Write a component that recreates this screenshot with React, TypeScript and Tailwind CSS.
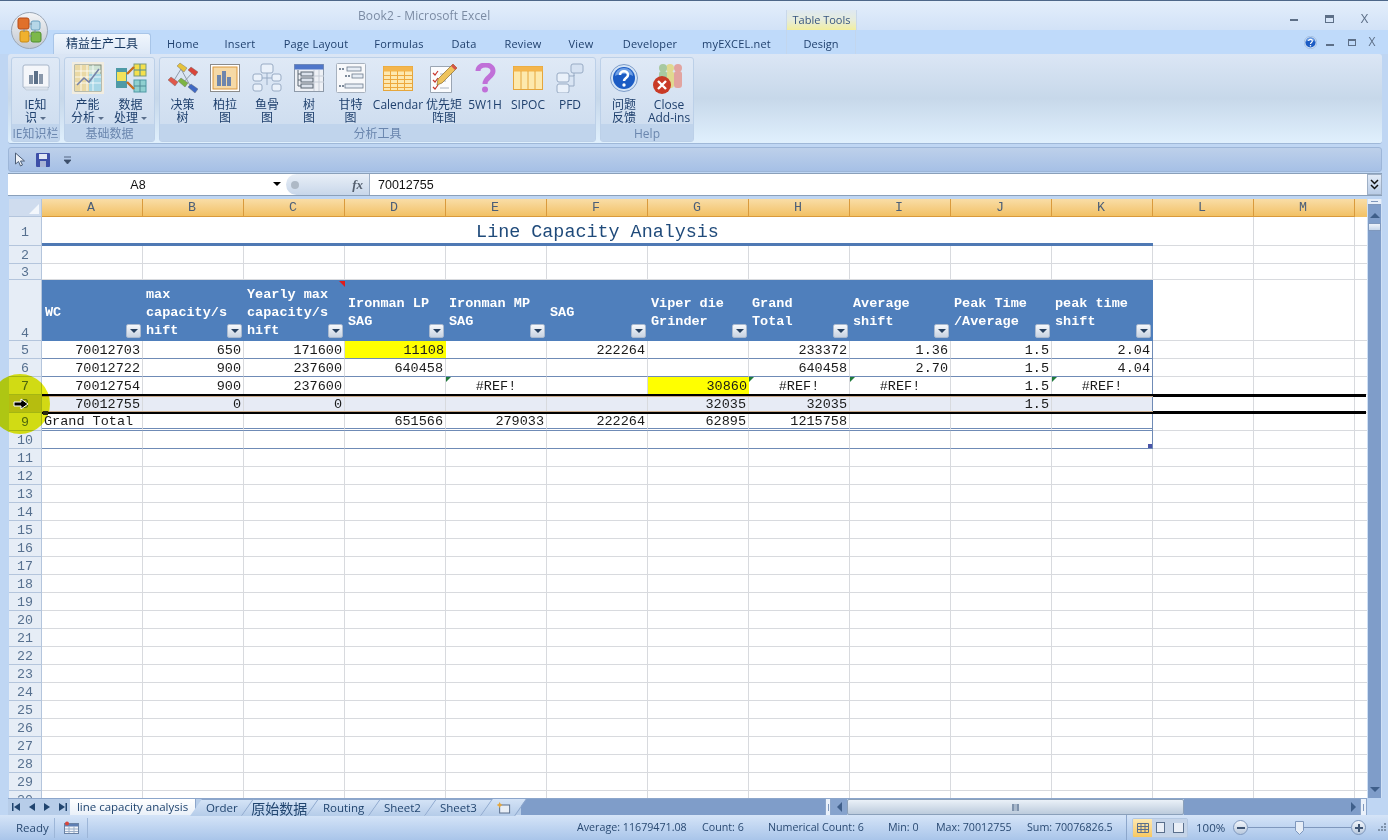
import type { ReactNode } from 'react';

const MONO = 'font-["Liberation_Mono","Noto_Sans_CJK_SC",monospace]';
const COL_LETTERS = ['A', 'B', 'C', 'D', 'E', 'F', 'G', 'H', 'I', 'J', 'K', 'L', 'M'];

type Cell = { t: string; left?: boolean; center?: boolean; yellow?: boolean; green?: boolean };
const n = (t: string): Cell => ({ t });
const ref: Cell = { t: '#REF!', center: true, green: true };

const HEADERS = [
  'WC',
  'max\ncapacity/s\nhift',
  'Yearly max\ncapacity/s\nhift',
  'Ironman LP\nSAG',
  'Ironman MP\nSAG',
  'SAG',
  'Viper die\nGrinder',
  'Grand\nTotal',
  'Average\nshift',
  'Peak Time\n/Average',
  'peak time\nshift',
];

const DATA: Record<number, Cell[]> = {
  5: [n('70012703'), n('650'), n('171600'), { t: '11108', yellow: true }, n(''), n('222264'), n(''), n('233372'), n('1.36'), n('1.5'), n('2.04')],
  6: [n('70012722'), n('900'), n('237600'), n('640458'), n(''), n(''), n(''), n('640458'), n('2.70'), n('1.5'), n('4.04')],
  7: [n('70012754'), n('900'), n('237600'), n(''), ref, n(''), { t: '30860', yellow: true }, ref, ref, n('1.5'), ref],
  8: [n('70012755'), n('0'), n('0'), n(''), n(''), n(''), n('32035'), n('32035'), n(''), n('1.5'), n('')],
  9: [{ t: 'Grand Total', left: true }, n(''), n(''), n('651566'), n('279033'), n('222264'), n('62895'), n('1215758'), n(''), n(''), n('')],
  10: Array.from({ length: 11 }, () => n('')),
};

const ROW_NUMS = Array.from({ length: 20 }, (_, i) => i + 11);

function RowHead({ num, h, bottom }: { num: number; h: string; bottom?: boolean }) {
  return (
    <div className={`${h} w-[33px] shrink-0 flex justify-center ${bottom ? 'items-end' : 'items-center pt-[3px]'} ${num === 8 ? 'bg-[#c8cdb8]' : 'bg-[#e6edf6]'} border-b border-r border-[#b4c5dc] text-[13.3px] leading-none text-[#56708f] ${MONO}`}>
      {num}
    </div>
  );
}

function BlankCols({ count, h }: { count: number; h: string }) {
  return (
    <>
      {Array.from({ length: count }, (_, i) => (
        <div key={i} className={`${h} w-[101px] shrink-0 border-r border-b border-[#d8dade]`} />
      ))}
    </>
  );
}

function FilterBtn() {
  return (
    <div className="absolute right-[2px] bottom-[3px] w-[15px] h-[14px] rounded-[2px] border border-[#a9b9cf] bg-gradient-to-b from-[#f6f8fb] to-[#c8d3e2] flex items-center justify-center">
      <div className="w-0 h-0 border-l-[4px] border-r-[4px] border-t-[4px] border-l-transparent border-r-transparent border-t-[#27405f]" />
    </div>
  );
}

function DataRow({ num }: { num: number }) {
  const cells = DATA[num];
  return (
    <div className="flex">
      <RowHead num={num} h="h-[18px]" />
      {cells.map((c, i) => (
        <div
          key={i}
          className={`relative h-[18px] w-[101px] shrink-0 flex items-center px-[2px] pt-[3px] text-[13.5px] leading-none text-[#1a1a1a] ${num === 9 ? 'border-b-[3px] border-double' : 'border-b'} border-[#6f8bb6] ${MONO}
            ${c.left ? 'justify-start' : c.center ? 'justify-center' : 'justify-end'}
            ${c.yellow ? 'bg-[#ffff00]' : num === 8 ? 'bg-[#e7ebf5]' : 'bg-white'}
            ${i === 10 ? 'border-r border-r-[#6f8bb6]' : c.yellow ? '' : 'border-r border-r-[#d8dade]'}`}
        >
          {c.green && <div className="absolute left-0 top-0 w-0 h-0 border-t-[5px] border-r-[5px] border-t-[#1f7a3a] border-r-transparent" />}
          {c.t}
          {num === 10 && i === 10 && <div className="absolute right-0 bottom-0 w-[4px] h-[4px] bg-[#4a55a8]" />}
        </div>
      ))}
      <BlankCols count={3} h="h-[18px]" />
    </div>
  );
}

function RibbonGroup({ w, label, children }: { w: string; label: string; children: ReactNode }) {
  return (
    <div className={`${w} h-[85px] shrink-0 flex flex-col rounded-[3px] border border-[#bcd0e8] bg-gradient-to-b from-[#dfe9f6] to-[#cbdbee] overflow-hidden`}>
      <div className="h-[68px] flex">{children}</div>
      <div className="flex-1 bg-[#c0d4ec] text-center text-[12px] leading-[19px] text-[#6a86ae]">{label}</div>
    </div>
  );
}

function RibbonItem({ w, lines, icon, caret }: { w: string; lines: string[]; icon: ReactNode; caret?: boolean }) {
  return (
    <div className={`${w} shrink-0 flex flex-col items-center`}>
      <div className="h-[40px] flex items-center justify-center">{icon}</div>
      <div className="text-center text-[12px] leading-[13px] text-[#20416e] whitespace-nowrap">
        {lines.map((l, i) => (
          <div key={i}>
            {l}
            {caret && i === lines.length - 1 && <span className="inline-block ml-[3px] mb-[2px] w-0 h-0 border-l-[3px] border-r-[3px] border-t-[3px] border-l-transparent border-r-transparent border-t-[#5a6f8c]" />}
          </div>
        ))}
      </div>
    </div>
  );
}

function IconIE() {
  return (
    <svg width="30" height="28" viewBox="0 0 30 28">
      <path d="M2 3a2 2 0 0 1 2-2h22a2 2 0 0 1 2 2v20l-2 2H5l-3-2z" fill="#f4f6fa" stroke="#a8b6c9" />
      <path d="M3 23h24v3H5z" fill="#dbe2ec" stroke="#b7c2d1" strokeWidth=".6" />
      <rect x="8" y="11" width="4" height="9" fill="#7f8fa3" />
      <rect x="13" y="7" width="4" height="13" fill="#5b6f87" />
      <rect x="18" y="10" width="4" height="10" fill="#8a98ab" />
    </svg>
  );
}

function IconCapacity() {
  return (
    <svg width="32" height="32" viewBox="0 0 32 32">
      <rect x="0" y="0" width="32" height="32" fill="#f2ede0" />
      <rect x="3" y="3" width="26" height="26" fill="#cfe3d4" stroke="#7d8a7a" />
      <rect x="3" y="3" width="14" height="26" fill="#ead9a5" />
      <rect x="17" y="12" width="12" height="17" fill="#a6d6e6" />
      <path d="M3 9h26M3 15h26M3 21h26M9 3v26M15 3v26M21 3v26" stroke="#fff" strokeWidth=".8" />
      <path d="M5 23l7-7 5 4 10-13" fill="none" stroke="#7783a8" strokeWidth="1.6" />
    </svg>
  );
}

function IconBlocks() {
  return (
    <svg width="32" height="32" viewBox="0 0 32 32">
      <rect x="1" y="6" width="11" height="20" fill="#4e9aa6" />
      <rect x="2" y="10" width="9" height="9" fill="#f2e25a" />
      <rect x="19" y="2" width="12" height="12" fill="#f4e04c" stroke="#7f9b7a" />
      <rect x="19" y="18" width="12" height="12" fill="#8fd0d0" stroke="#4e9aa6" />
      <path d="M25 18v12M19 24h12M25 2v12M19 8h12" stroke="#4e8a96" />
      <path d="M12 12l7-7M12 20l7 7" stroke="#c86d1c" strokeWidth="2.4" />
    </svg>
  );
}

function IconDecision() {
  const d = (x: number, y: number, c: string) => <path d={`M${x - 5} ${y - 2}l3-3 7 5-3 4z`} fill={c} stroke="#666" strokeWidth=".4" />;
  return (
    <svg width="30" height="32" viewBox="0 0 30 32">
      <path d="M13 7l11 20M13 7L5 20M25 10L14 22" stroke="#8f9aa8" strokeWidth="1" />
      {d(14, 6, '#e5c23c')}
      {d(25, 10, '#d9453a')}
      {d(5, 20, '#e0584a')}
      {d(15, 21, '#7cb544')}
      {d(25, 27, '#3f69c4')}
    </svg>
  );
}

function IconPareto() {
  return (
    <svg width="30" height="28" viewBox="0 0 30 28">
      <rect x=".5" y=".5" width="29" height="27" fill="#fff" stroke="#8b8b8b" />
      <rect x="3" y="3" width="24" height="22" fill="#f5d9a6" stroke="#d9973f" />
      <rect x="7" y="11" width="4" height="11" fill="#6d86ad" />
      <rect x="12" y="7" width="4" height="15" fill="#6d86ad" />
      <rect x="17" y="13" width="4" height="9" fill="#6d86ad" />
    </svg>
  );
}

function IconFish() {
  return (
    <svg width="30" height="30" viewBox="0 0 30 30" fill="#eaf1fa" stroke="#98abc4">
      <path d="M4 15h22M15 8v14" />
      <rect x="9" y="1" width="12" height="9" rx="2" />
      <rect x="1" y="11" width="9" height="7" rx="2" />
      <rect x="20" y="11" width="9" height="7" rx="2" />
      <rect x="1" y="21" width="9" height="7" rx="2" />
      <rect x="20" y="21" width="9" height="7" rx="2" />
    </svg>
  );
}

function IconTree() {
  return (
    <svg width="30" height="28" viewBox="0 0 30 28">
      <rect x=".5" y=".5" width="29" height="27" fill="#eef1f6" stroke="#8e9aa9" />
      <rect x=".5" y=".5" width="29" height="5" fill="#4f76c9" />
      <path d="M20 6v21M25 6v21M20 12h10M20 18h10" stroke="#c7ced8" />
      <rect x="7" y="8" width="12" height="4" fill="#dbe2ec" stroke="#5b6673" />
      <rect x="7" y="14" width="12" height="4" fill="#dbe2ec" stroke="#5b6673" />
      <rect x="7" y="20" width="12" height="4" fill="#dbe2ec" stroke="#5b6673" />
      <path d="M4 6v16h3M4 10h3M4 16h3" fill="none" stroke="#5b6673" />
    </svg>
  );
}

function IconGantt() {
  return (
    <svg width="30" height="30" viewBox="0 0 30 30">
      <rect x=".5" y=".5" width="29" height="29" rx="1" fill="#f8f9fb" stroke="#a8b2bf" />
      <g fill="#e7edf5" stroke="#6c7a8c" strokeWidth=".8">
        <rect x="11" y="4" width="14" height="4" />
        <rect x="16" y="11" width="11" height="4" />
        <rect x="9" y="21" width="18" height="4" />
      </g>
      <path d="M3 6h6M9 13h6M3 23h5" stroke="#56677c" strokeWidth="1.6" strokeDasharray="2 1" />
    </svg>
  );
}

function IconCalendar() {
  return (
    <svg width="30" height="25" viewBox="0 0 30 25">
      <rect x=".5" y=".5" width="29" height="24" fill="#fde8b0" stroke="#e5a63c" />
      <rect x=".5" y=".5" width="29" height="5" fill="#f4b54c" />
      <path d="M1 9.500h28M1 13.500h28M1 17.500h28M1 21.500h28M7.500 5v19M14.500 5v19M21.500 5v19" stroke="#eda83d" />
    </svg>
  );
}

function IconPriority() {
  return (
    <svg width="28" height="30" viewBox="0 0 28 30">
      <path d="M.5 3.500h21v26H.5z" fill="#fbfcfe" stroke="#9aa5b3" />
      <path d="M3 10l2 2 3-4M3 17l2 2 3-4M3 24l2 2 3-4" fill="none" stroke="#c8392e" strokeWidth="1.2" />
      <path d="M10 11h9M10 18h6M10 25h9" stroke="#aab4c0" />
      <path d="M23 1l4 4-15 15-5 2 1-6z" fill="#eec35c" stroke="#8a6a2c" strokeWidth=".7" />
      <path d="M23 1l4 4-2 2-4-4z" fill="#d4544a" />
    </svg>
  );
}

function IconQuestion() {
  return (
    <svg width="22" height="30" viewBox="0 0 22 30" fill="none">
      <path d="M4 8c0-8 15-8 15 0 0 6-8 6-8 13" stroke="#c070d8" strokeWidth="5" />
      <circle cx="11" cy="26.500" r="3" fill="#c070d8" />
    </svg>
  );
}

function IconSipoc() {
  return (
    <svg width="30" height="24" viewBox="0 0 30 24">
      <rect x=".5" y=".5" width="29" height="23" fill="#fde9ad" stroke="#e5a63c" />
      <rect x=".5" y=".5" width="29" height="5" fill="#f4b54c" />
      <path d="M8 5v18M15 5v18M22 5v18" stroke="#e5a63c" />
    </svg>
  );
}

function IconPfd() {
  return (
    <svg width="28" height="30" viewBox="0 0 28 30" fill="#eaf1fa" stroke="#98abc4">
      <path d="M13 13h5V8M13 23h5V12" fill="none" />
      <rect x="15" y="1" width="12" height="9" rx="2" fill="#d6e2f2" />
      <rect x="1" y="10" width="12" height="9" rx="2" />
      <rect x="1" y="21" width="12" height="9" rx="2" />
    </svg>
  );
}

function IconHelp({ size = 28 }: { size?: number }) {
  return (
    <svg width={size} height={size} viewBox="0 0 28 28">
      <circle cx="14" cy="14" r="13.500" fill="#d4e4f6" stroke="#7d9cc8" />
      <circle cx="14" cy="14" r="11" fill="#1c5cc4" />
      <path d="M5 12a9 8 0 0 1 18 0c-5-3-13-3-18 0z" fill="#6f9fe4" />
      <path d="M10 11c0-5 8-5 8 0 0 3-4 3-4 6" fill="none" stroke="#fff" strokeWidth="2.600" />
      <circle cx="14" cy="21" r="1.700" fill="#fff" />
    </svg>
  );
}

function IconAddins() {
  const p = (x: number, c: string) => (
    <g fill={c}>
      <circle cx={x} cy="6" r="4" />
      <rect x={x - 4} y="9" width="8" height="17" rx="3" />
    </g>
  );
  return (
    <svg width="34" height="32" viewBox="0 0 34 32">
      {p(26, '#e2a4a0')}
      {p(18, '#e0d98f')}
      {p(11, '#a8c9a0')}
      <circle cx="10" cy="23" r="9" fill="#c93a26" />
      <path d="M6 19l8 8M14 19l-8 8" stroke="#fff" strokeWidth="2.400" />
    </svg>
  );
}

function IconSave() {
  return (
    <svg width="14" height="14" viewBox="0 0 14 14">
      <rect width="14" height="14" rx="1" fill="#3d4fa8" />
      <rect x="3" y="1" width="8" height="5" fill="#dfe6f5" />
      <rect x="4" y="8" width="6" height="6" fill="#a9b4d6" />
    </svg>
  );
}

function OfficeLogo() {
  return (
    <svg width="30" height="30" viewBox="0 0 30 30">
      <rect x="3" y="2" width="11" height="11" rx="2" fill="#e0702a" stroke="#b54a18" />
      <rect x="16" y="5" width="9" height="9" rx="2" fill="#b6d7e8" stroke="#6ba1c0" />
      <rect x="5" y="15" width="9" height="11" rx="2" fill="#f0b12e" stroke="#c98a14" />
      <rect x="16" y="16" width="10" height="10" rx="2" fill="#7db84a" stroke="#4f8f2c" />
      <path d="M14 8h3M14 20h3M9 13v3M20 14v3" stroke="#7f8b99" />
    </svg>
  );
}

function SheetTab({ label, w, cjk }: { label: string; w: string; cjk?: boolean }) {
  return (
    <div className={`${w} h-[17px] shrink-0 -skew-x-[35deg] border-r border-t border-[#8ca6cb] bg-gradient-to-b from-[#d4e3f6] to-[#b5cce9] flex items-center justify-center`}>
      <span className={`skew-x-[35deg] text-[#21456f] whitespace-nowrap ${cjk ? 'text-[14px]' : 'text-[11.5px]'}`}>{label}</span>
    </div>
  );
}

export default function App() {
  const tabs: [string, string][] = [
    ['Home', 'w-[64px]'],
    ['Insert', 'w-[50px]'],
    ['Page Layout', 'w-[102px]'],
    ['Formulas', 'w-[64px]'],
    ['Data', 'w-[66px]'],
    ['Review', 'w-[52px]'],
    ['View', 'w-[64px]'],
    ['Developer', 'w-[74px]'],
    ['myEXCEL.net', 'w-[99px]'],
  ];

  return (
    <div className='relative w-[1388px] h-[840px] overflow-hidden flex flex-col bg-[#bfd6f3] font-["Open_Sans","Noto_Sans_CJK_SC",sans-serif] text-[11px] text-[#20416e]'>
      {/* title bar */}
      <div className="h-[30px] shrink-0 flex items-start border-t border-[#4d6789] bg-gradient-to-b from-[#e3eefb] to-[#d2e2f7]">
        <div className="ml-[358px] mt-[7px] w-[428px] text-[12px] leading-[16px] text-[#7b8ba3] tracking-[0.1px]">Book2 - Microsoft Excel</div>
        <div className="mt-[9px] w-[71px] h-[20px] border-x border-[#c9d8ea] bg-gradient-to-b from-[#dfe9f2] via-[#e6ecdc] to-[#f2ee9c] text-center text-[11px] leading-[19px] text-[#37557f]">Table Tools</div>
        <div className="flex-1" />
        <div className="mt-[9px] w-[36px] flex justify-center"><div className="w-[8px] h-[2px] mt-[9px] bg-[#5d6f87]" /></div>
        <div className="mt-[14px] w-[35px] flex justify-center"><div className="w-[9px] h-[8px] border border-t-[3px] border-[#5d6f87]" /></div>
        <div className="mt-[9px] w-[35px] text-center text-[13px] leading-[16px] text-[#5d6f87] mr-[6px]">X</div>
      </div>

      {/* tabs */}
      <div className="h-[24px] shrink-0 flex items-end bg-[#bfdafa]">
        <div className="ml-[53px] w-[98px] h-[21px] rounded-t-[3px] border border-b-0 border-[#a8c5e8] bg-gradient-to-b from-[#f0f6fd] to-[#dde8f6] text-center text-[12px] leading-[20px] text-[#15365f]">精益生产工具</div>
        {tabs.map(([t, w]) => (
          <div key={t} className={`${w} h-[24px] shrink-0 text-center leading-[27px] tracking-[0.2px]`}>{t}</div>
        ))}
        <div className="w-[70px] h-[24px] shrink-0 border-x border-[#c2d6ee] text-center leading-[27px]">Design</div>
        <div className="flex-1" />
        <div className="h-[24px] flex items-center mr-[6px]">
          <IconHelp size={13} />
          <div className="w-[8px] h-[2px] ml-[9px] mt-[5px] bg-[#5d6f87]" />
          <div className="w-[8px] h-[7px] ml-[14px] border border-t-[2px] border-[#5d6f87]" />
          <div className="w-[20px] ml-[6px] text-center text-[12px] text-[#5d6f87]">X</div>
        </div>
      </div>

      {/* ribbon */}
      <div className="h-[90px] shrink-0 ml-[8px] mr-[6px] px-[3px] pt-[3px] flex gap-[4px] rounded-[3px] border-b border-[#9fb8d8] bg-gradient-to-b from-[#dbe6f5] via-[#c7d8ea] to-[#e0f0fd]">
        <RibbonGroup w="w-[49px]" label="IE知识栏">
          <RibbonItem w="w-[47px]" lines={['IE知', '识']} caret icon={<IconIE />} />
        </RibbonGroup>
        <RibbonGroup w="w-[91px]" label="基础数据">
          <RibbonItem w="w-[45px]" lines={['产能', '分析']} caret icon={<IconCapacity />} />
          <RibbonItem w="w-[41px]" lines={['数据', '处理']} caret icon={<IconBlocks />} />
        </RibbonGroup>
        <RibbonGroup w="w-[437px]" label="分析工具">
          <div className="w-[1px] shrink-0" />
          <RibbonItem w="w-[43px]" lines={['决策', '树']} icon={<IconDecision />} />
          <RibbonItem w="w-[42px]" lines={['柏拉', '图']} icon={<IconPareto />} />
          <RibbonItem w="w-[42px]" lines={['鱼骨', '图']} icon={<IconFish />} />
          <RibbonItem w="w-[42px]" lines={['树', '图']} icon={<IconTree />} />
          <RibbonItem w="w-[41px]" lines={['甘特', '图']} icon={<IconGantt />} />
          <RibbonItem w="w-[54px]" lines={['Calendar']} icon={<IconCalendar />} />
          <RibbonItem w="w-[38px]" lines={['优先矩', '阵图']} icon={<IconPriority />} />
          <RibbonItem w="w-[44px]" lines={['5W1H']} icon={<IconQuestion />} />
          <RibbonItem w="w-[42px]" lines={['SIPOC']} icon={<IconSipoc />} />
          <RibbonItem w="w-[42px]" lines={['PFD']} icon={<IconPfd />} />
        </RibbonGroup>
        <RibbonGroup w="w-[94px]" label="Help">
          <RibbonItem w="w-[46px]" lines={['问题', '反馈']} icon={<IconHelp />} />
          <RibbonItem w="w-[44px]" lines={['Close', 'Add-ins']} icon={<IconAddins />} />
        </RibbonGroup>
      </div>

      {/* quick access */}
      <div className="h-[25px] shrink-0 mt-[3px] ml-[8px] mr-[6px] flex items-center rounded-[3px] border border-[#9db6d8] bg-gradient-to-b from-[#bdd0ea] to-[#a6c0e6]">
        <svg className="ml-[5px]" width="12" height="15" viewBox="0 0 12 15">
          <path d="M1.500 1v11l3-2.500 2 4.500 2-1-2-4h4z" fill="#eef2f8" stroke="#4d5f78" />
        </svg>
        <div className="ml-[10px]"><IconSave /></div>
        <svg className="ml-[14px]" width="7" height="8" viewBox="0 0 7 8">
          <path d="M0 1h7M0 4h7l-3.500 4z" fill="#3c4f6b" stroke="#3c4f6b" strokeWidth=".8" />
        </svg>
      </div>

      {/* formula bar */}
      <div className="h-[23px] shrink-0 mt-[1px] ml-[8px] mr-[6px] flex border-y border-[#8aa0ba] bg-white text-[12.500px] text-[#111] font-['Liberation_Sans',sans-serif]">
        <div className="w-[278px] shrink-0 relative flex items-center justify-center pr-[18px] pt-[1px]">
          A8
          <div className="absolute right-[5px] top-[8px] w-0 h-0 border-l-[4px] border-r-[4px] border-t-[4px] border-l-transparent border-r-transparent border-t-black" />
        </div>
        <div className="w-[84px] shrink-0 flex items-center justify-between rounded-l-full border-r border-[#9fb0c6] bg-gradient-to-b from-[#e9eff7] to-[#c8d7ea]">
          <div className="w-[8px] h-[8px] ml-[5px] rounded-full bg-[#aeb9c6]" />
          <span className="mr-[6px] font-['Liberation_Serif',serif] italic font-bold text-[13px] text-[#55606f]">fx</span>
        </div>
        <div className="flex-1 pl-[8px] leading-[22px]">70012755</div>
        <div className="w-[15px] shrink-0 flex items-center justify-center border border-[#9fb0c6] bg-gradient-to-b from-[#e2ebf7] to-[#b9cce6]">
          <svg width="9" height="11" viewBox="0 0 9 11" fill="none" stroke="#111" strokeWidth="1.500">
            <path d="M1 1l3.500 3.500L8 1M1 6l3.500 3.500L8 6" />
          </svg>
        </div>
      </div>

      {/* sheet */}
      <div className="flex-1 min-h-0 flex pt-[3px] pl-[9px] pr-[6px]">
        <div className="w-[1358px] shrink-0 overflow-hidden bg-white">
          <div className="flex h-[18px]">
            <div className="w-[33px] shrink-0 bg-[#cfdcee] border-r border-b border-[#b4c5dc] flex items-end justify-end p-[2px]">
              <div className="w-0 h-0 border-b-[10px] border-l-[10px] border-b-[#f3f7fc] border-l-transparent" />
            </div>
            {COL_LETTERS.map(l => (
              <div key={l} className={`w-[101px] shrink-0 flex items-center justify-center pr-[2px] border-r border-b border-[#d99a3c] bg-gradient-to-b from-[#f9dda6] to-[#f2c164] text-[13.3px] text-[#4c5f78] ${MONO}`}>{l}</div>
            ))}
            <div className="flex-1 bg-gradient-to-b from-[#f9dda6] to-[#f2c164]" />
          </div>

          {/* row 1 title */}
          <div className="flex">
            <RowHead num={1} h="h-[29px]" />
            <div className={`h-[29px] w-[1111px] shrink-0 text-center text-[18.400px] leading-[32px] text-[#1f4a7a] border-b-[3px] border-[#4f79b4] ${MONO}`}>Line Capacity Analysis</div>
            <BlankCols count={3} h="h-[29px]" />
          </div>
          <div className="flex"><RowHead num={2} h="h-[18px]" /><BlankCols count={14} h="h-[18px]" /></div>
          <div className="flex"><RowHead num={3} h="h-[16px]" /><BlankCols count={14} h="h-[16px]" /></div>

          {/* row 4 table header */}
          <div className="flex">
            <RowHead num={4} h="h-[61px]" bottom />
            {HEADERS.map((text, i) => (
              <div key={i} className={`relative h-[61px] w-[101px] shrink-0 flex items-center px-[3px] pt-[4px] bg-[#4f7fbc] text-white font-bold text-[13.500px] leading-[18px] whitespace-pre-line ${MONO}`}>
                {i === 2 && <div className="absolute right-0 top-[1px] w-0 h-0 border-t-[6px] border-l-[6px] border-t-[#e01b1b] border-l-transparent" />}
                <div>{text}</div>
                <FilterBtn />
              </div>
            ))}
            <BlankCols count={3} h="h-[61px]" />
          </div>

          {[5, 6, 7, 8, 9, 10].map(r => <DataRow key={r} num={r} />)}

          {ROW_NUMS.map(r => (
            <div key={r} className="flex"><RowHead num={r} h="h-[18px]" /><BlankCols count={14} h="h-[18px]" /></div>
          ))}
        </div>

        {/* vertical scrollbar */}
        <div className="w-[15px] shrink-0 flex flex-col items-center bg-[#7f9dc9] border-x border-[#cfe0f5]">
          <div className="w-full h-[6px] bg-[#e8eff9] border-b border-[#7f98bd] flex items-center justify-center"><div className="w-[7px] h-[1px] bg-[#7f98bd]" /></div>
          <div className="mt-[8px] w-0 h-0 border-l-[5px] border-r-[5px] border-b-[5px] border-l-transparent border-r-transparent border-b-[#3f5f8a]" />
          <div className="mt-[5px] w-full h-[8px] border border-[#7f98bd] bg-gradient-to-b from-[#eef3fa] to-[#c6d6ea]" />
          <div className="flex-1" />
          <div className="mb-[6px] w-0 h-0 border-l-[5px] border-r-[5px] border-t-[5px] border-l-transparent border-r-transparent border-t-[#3f5f8a]" />
        </div>
      </div>

      {/* sheet tabs + horizontal scrollbar */}
      <div className="h-[17px] shrink-0 ml-[8px] mr-[21px] flex bg-[#b7cde9] border-t border-[#8ca6cb]">
        <div className="w-[62px] shrink-0 flex items-center justify-center gap-[9px] text-[#21456f]">
          <svg width="8" height="8" viewBox="0 0 8 8" fill="#21456f"><path d="M0 0h1.500v8H0zM8 0v8L2 4z" /></svg>
          <svg width="6" height="8" viewBox="0 0 6 8" fill="#21456f"><path d="M6 0v8L0 4z" /></svg>
          <svg width="6" height="8" viewBox="0 0 6 8" fill="#21456f"><path d="M0 0v8l6-4z" /></svg>
          <svg width="8" height="8" viewBox="0 0 8 8" fill="#21456f"><path d="M6.500 0H8v8H6.500zM0 0v8l6-4z" /></svg>
        </div>
        <div className="w-[126px] shrink-0 h-[17px] bg-gradient-to-b from-[#fff] to-[#e8eff8] border-r border-[#8ca6cb] text-[11.500px] leading-[16px] text-center text-[#21456f] whitespace-nowrap">line capacity analysis</div>
        <SheetTab label="Order" w="w-[52px]" />
        <SheetTab label="原始数据" w="w-[65px]" cjk />
        <SheetTab label="Routing" w="w-[62px]" />
        <SheetTab label="Sheet2" w="w-[56px]" />
        <SheetTab label="Sheet3" w="w-[56px]" />
        <div className="w-[34px] h-[17px] shrink-0 -skew-x-[35deg] border-r border-[#8ca6cb] bg-gradient-to-b from-[#d4e3f6] to-[#b5cce9] flex items-center justify-center">
          <svg className="skew-x-[35deg]" width="14" height="12" viewBox="0 0 14 12">
            <rect x="3" y="3" width="10" height="8" fill="#e8eef6" stroke="#5a6f8c" />
            <path d="M3 0l1 2 2 1-2 1-1 2-1-2-2-1 2-1z" fill="#e5a63c" />
          </svg>
        </div>
        <div className="w-[304px] shrink-0 bg-[#7f9dc9]" />
        <div className="w-[6px] shrink-0 bg-[#eaf1fa] border-x border-[#8ca6cb] flex items-center justify-center"><div className="w-[1px] h-[7px] bg-[#7f98bd]" /></div>
        <div className="w-[16px] shrink-0 flex items-center justify-center bg-[#86a3cd]"><div className="w-0 h-0 border-y-[5px] border-r-[5px] border-y-transparent border-r-[#3f5f8a]" /></div>
        <div className="w-[337px] shrink-0 rounded-[2px] border border-[#8aa0ba] bg-gradient-to-b from-[#eaf1f8] to-[#bccbdc] flex items-center justify-center">
          <div className="w-[7px] h-[7px] border-x-2 border-[#7f93ac] bg-[#a9b9cc]" />
        </div>
        <div className="flex-1 bg-[#7f9dc9] flex items-center justify-end pr-[4px]"><div className="w-0 h-0 border-y-[5px] border-l-[5px] border-y-transparent border-l-[#3f5f8a]" /></div>
        <div className="w-[7px] shrink-0 bg-[#eaf1fa] border-x border-[#8ca6cb] flex items-center justify-center"><div className="w-[1px] h-[7px] bg-[#7f98bd]" /></div>
      </div>

      {/* status bar */}
      <div className="h-[25px] shrink-0 flex items-center bg-gradient-to-b from-[#d5e4f7] to-[#a9c5ea] text-[10.700px] text-[#2a4a72]">
        <div className="w-[54px] pl-[16px] shrink-0 text-[11.500px]">Ready</div>
        <div className="h-[20px] border-l border-[#9db6d8]" />
        <svg className="ml-[9px]" width="15" height="13" viewBox="0 0 15 13">
          <rect x=".5" y="2.500" width="14" height="10" fill="#f2f5fa" stroke="#6a82a4" />
          <rect x="1" y="3" width="13" height="2.500" fill="#5f7fb4" />
          <path d="M1 8h13M1 10.500h13M5 5v7M10 5v7" stroke="#9db0c9" />
          <circle cx="3" cy="2.500" r="2" fill="#d9453a" />
        </svg>
        <div className="ml-[8px] h-[20px] border-l border-[#9db6d8]" />
        <div className="ml-[489px] w-[125px] shrink-0">Average: 11679471.08</div>
        <div className="w-[66px] shrink-0">Count: 6</div>
        <div className="w-[120px] shrink-0">Numerical Count: 6</div>
        <div className="w-[48px] shrink-0">Min: 0</div>
        <div className="w-[91px] shrink-0">Max: 70012755</div>
        <div className="w-[99px] shrink-0">Sum: 70076826.5</div>
        <div className="h-[25px] border-l border-[#8ca6cb]" />
        <div className="ml-[5px] flex h-[20px] w-[56px] shrink-0 rounded-[2px] border border-[#b4c8e2] overflow-hidden">
          <div className="w-[20px] flex items-center justify-center bg-gradient-to-b from-[#fde8b0] to-[#f8c860]">
            <svg width="12" height="10" viewBox="0 0 12 10" fill="none" stroke="#5a6f8c"><path d="M.5.500h11v9H.5zM.5 3.500h11M.5 6.500h11M4 .5v9M8 .5v9" /></svg>
          </div>
          <div className="w-[18px] flex items-center justify-center bg-[#c5d4e8]">
            <div className="w-[9px] h-[11px] border border-[#5a6f8c] bg-[#e9eef6]" />
          </div>
          <div className="w-[18px] flex items-center justify-center bg-[#c5d4e8]">
            <div className="w-[11px] h-[10px] border border-t-0 border-[#5a6f8c] bg-[#e9eef6]" />
          </div>
        </div>
        <div className="ml-[8px] w-[37px] shrink-0 text-[11.500px]">100%</div>
        <div className="w-[15px] h-[15px] shrink-0 rounded-full border border-[#7f98bd] bg-gradient-to-b from-[#f2f6fb] to-[#b9c9de] flex items-center justify-center">
          <div className="w-[8px] h-[2px] bg-[#3f5574]" />
        </div>
        <div className="w-[103px] shrink-0 flex items-center">
          <div className="w-[47px] h-[1px] bg-[#7f98bd]" />
          <svg width="9" height="14" viewBox="0 0 9 14"><path d="M.5.500h8v9l-4 4-4-4z" fill="#e6edf6" stroke="#7f98bd" /></svg>
          <div className="flex-1 h-[1px] bg-[#7f98bd]" />
        </div>
        <div className="w-[15px] h-[15px] shrink-0 rounded-full border border-[#7f98bd] bg-gradient-to-b from-[#f2f6fb] to-[#b9c9de] flex items-center justify-center relative">
          <div className="w-[8px] h-[2px] bg-[#3f5574]" />
          <div className="absolute w-[2px] h-[8px] bg-[#3f5574]" />
        </div>
        <svg className="ml-[11px]" width="9" height="9" viewBox="0 0 9 9" fill="#7f93ac"><path d="M7 0h2v2H7zM4 3h2v2H4zM7 3h2v2H7zM1 6h2v2H1zM4 6h2v2H4zM7 6h2v2H7z" /></svg>
      </div>

      {/* overlays: office button, selected-row lines, pointer highlight */}
      <div className="absolute left-[11px] top-[12px] w-[37px] h-[37px] rounded-full border border-[#9aa6b5] bg-gradient-to-b from-[#f3f4f6] to-[#c3c9d2] flex items-center justify-center">
        <OfficeLogo />
      </div>
      <div className="absolute left-[42px] top-[394px] w-[1111px] h-[3px] border-t-2 border-black bg-[#c7a98a]" />
      <div className="absolute left-[42px] top-[411px] w-[1111px] h-[3px] border-b-2 border-black bg-[#c7a98a]" />
      <div className="absolute left-[1153px] top-[394px] w-[213px] h-[3px] bg-black" />
      <div className="absolute left-[1153px] top-[411px] w-[213px] h-[3px] bg-black" />
      <div className="absolute left-[43px] top-[411px] w-[5px] h-[4px] bg-[#2e2eb8]" />
      <div className="absolute left-[-10px] top-[374px] w-[60px] h-[60px] rounded-full bg-[#e8ec14] mix-blend-multiply" />
      <svg className="absolute left-[13px] top-[398px]" width="16" height="12" viewBox="0 0 16 12">
        <path d="M1 4h7V1l7 5-7 5V8H1z" fill="#000" stroke="#fff" strokeWidth="1" />
      </svg>
    </div>
  );
}
